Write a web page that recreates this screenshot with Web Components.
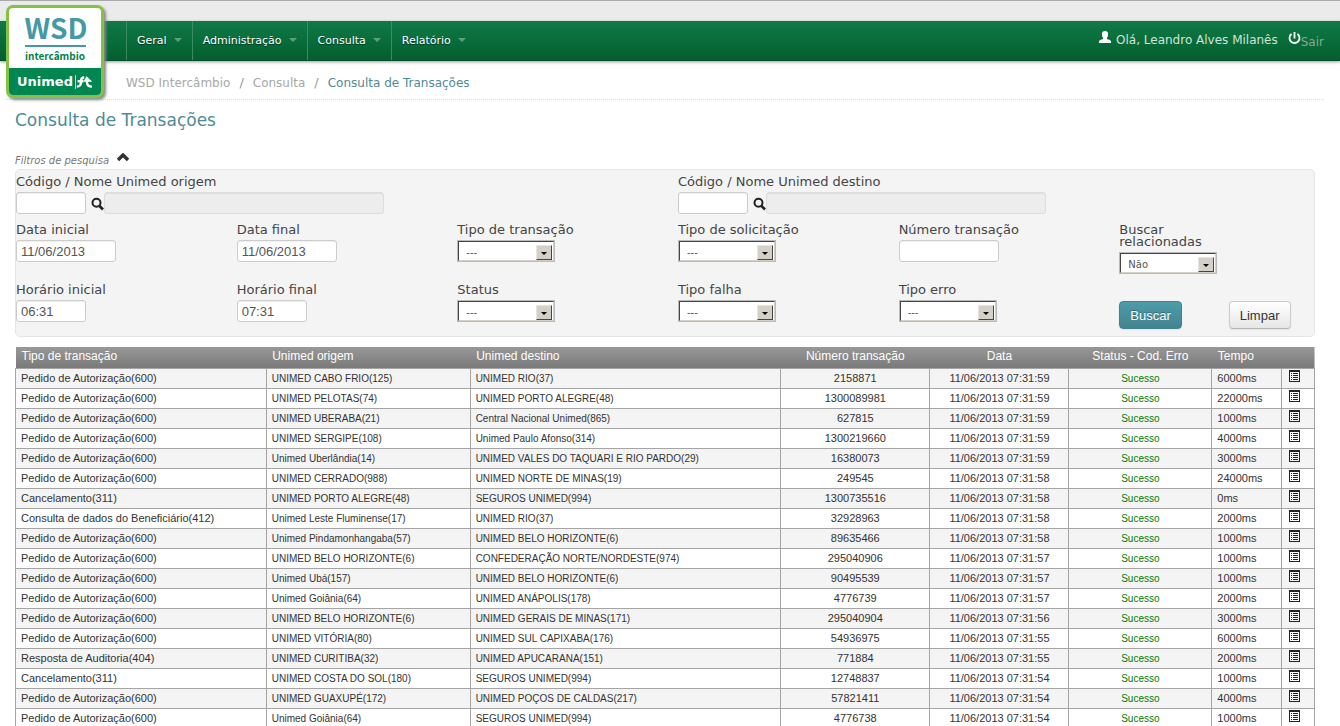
<!DOCTYPE html>
<html lang="pt-BR">
<head>
<meta charset="utf-8">
<title>WSD Intercâmbio - Consulta de Transações</title>
<style>
html { scrollbar-width: none; }
body { margin: 0; background: #fff; color: #444; font-family: "DejaVu Sans", sans-serif; font-size: 12px; }
</style>
</head>
<body>
<wsd-app>
  <wsd-header slot="header" user="Leandro Alves Milanês">
    <wsd-menu-item>Geral</wsd-menu-item>
    <wsd-menu-item>Administração</wsd-menu-item>
    <wsd-menu-item>Consulta</wsd-menu-item>
    <wsd-menu-item>Relatório</wsd-menu-item>
  </wsd-header>
  <wsd-breadcrumb slot="header">
    <a href="#">WSD Intercâmbio</a>
    <a href="#">Consulta</a>
    <a href="#" aria-current="page">Consulta de Transações</a>
  </wsd-breadcrumb>
  <h1>Consulta de Transações</h1>
  <wsd-filters>
    <wsd-field class="wide" kind="lookup" label="Código / Nome Unimed origem"></wsd-field>
    <wsd-field class="wide" kind="lookup" label="Código / Nome Unimed destino"></wsd-field>
    <wsd-field label="Data inicial" value="11/06/2013"></wsd-field>
    <wsd-field label="Data final" value="11/06/2013"></wsd-field>
    <wsd-field kind="select" label="Tipo de transação" value="---"></wsd-field>
    <wsd-field kind="select" label="Tipo de solicitação" value="---"></wsd-field>
    <wsd-field label="Número transação"></wsd-field>
    <wsd-field class="narrow" kind="select" label="Buscar relacionadas" value="Não"></wsd-field>
    <wsd-field kind="short" label="Horário inicial" value="06:31"></wsd-field>
    <wsd-field kind="short" label="Horário final" value="07:31"></wsd-field>
    <wsd-field kind="select" label="Status" value="---"></wsd-field>
    <wsd-field kind="select" label="Tipo falha" value="---"></wsd-field>
    <wsd-field kind="select" label="Tipo erro" value="---"></wsd-field>
    <div class="actions">
      <wsd-button variant="primary">Buscar</wsd-button>
      <wsd-button>Limpar</wsd-button>
    </div>
  </wsd-filters>
  <wsd-transactions></wsd-transactions>
</wsd-app>

<script>
const define = (name, html) => customElements.define(name, class extends HTMLElement {
  constructor() {
    super();
    this.attachShadow({ mode: "open" });
  }
  connectedCallback() {
    if (this.shadowRoot.firstChild) return;
    const t = document.createElement("template");
    t.innerHTML = typeof html === "function" ? html(this) : html;
    this.shadowRoot.append(t.content.cloneNode(true));
  }
});

define("wsd-app", `
<style>
:host { display: block; }
main { padding: 0 25px 0 15px; }
::slotted(h1) { margin: 10px 0 24px; font-size: 17px; font-weight: normal; line-height: 20px; color: #4e8b97; }
</style>
<slot name="header"></slot>
<main><slot></slot></main>`);

define("wsd-logo", `
<style>
:host { display: block; }
a { display: block; width: 92px; border: 3px solid #83c341; border-radius: 7px; overflow: hidden; background: #fff; box-shadow: 2px 2px 3px #888; text-decoration: none; text-align: center; font-family: "Noto Sans CJK JP", sans-serif; font-weight: bold; }
.name { display: block; width: 61px; margin: 0 auto; padding: 5px 0 4px; border-bottom: 2px solid #4499a5; color: #4499a5; font-size: 28px; line-height: 28px; }
.sub { display: block; height: 21px; color: #00834c; font-size: 10px; line-height: 17px; }
.brand { display: flex; align-items: center; justify-content: center; gap: 1px; height: 27px; background: #008751; color: #fff; font: bold 13px/27px "DejaVu Sans", sans-serif; }
</style>
<a href="#"><span class="name">WSD</span><span class="sub">intercâmbio</span>
<span class="brand">Unimed<svg width="19" height="14" viewBox="0 0 19 14" fill="none" stroke="#fff" aria-hidden="true"><path d="M1.500 0v14" stroke-width="1" opacity=".7"/><path d="M2.800 11.600Q6.800 11.400 7 7.500V5.500Q7.300 2.500 10.200 2.500M3.500 6.200H9.500M13 4V7.500Q13.200 11.600 18 11.600" stroke-width="2.400"/><path d="M9.500 6.800L12.500 1.200L18.300 6.800Z" fill="#fff" stroke="none"/></svg></span></a>`);

define("wsd-menu-item", `
<style>
:host { display: block; border-left: 1px solid #3d8a63; }
a { display: flex; align-items: center; gap: 7px; height: 38px; padding: 0 10px; color: #fff; font-size: 11px; text-decoration: none; text-shadow: 0 1px 1px #033; }
i { border: 4px solid transparent; border-top-color: #5f9f80; border-bottom: 0; }
</style>
<a href="#"><slot></slot><i></i></a>`);

define("wsd-header", el => `
<style>
:host { display: block; border-top: 1px solid #a9a9a9; background: #ebebeb; padding-top: 20px; }
.bar { display: flex; justify-content: space-between; height: 40px; box-sizing: border-box; padding: 0 16px 0 126px; background: linear-gradient(#107a46, #025f30); border-bottom: 1px solid #035028; box-shadow: 0 1px 3px #999; }
wsd-logo { position: absolute; top: 5px; left: 6px; z-index: 2; }
nav, .user { display: flex; }
.user { align-items: center; height: 38px; color: #d0e4d8; font-size: 12px; }
.user > svg { margin: -6px 5px 0 0; }
a { display: flex; color: #85a893; margin-left: 10px; text-decoration: none; align-items: flex-end; }
a svg { margin-bottom: 4px; }
</style>
<wsd-logo></wsd-logo>
<div class="bar">
  <nav><slot></slot></nav>
  <div class="user">
    <svg width="12" height="12" viewBox="0 0 12 12" fill="#fff" aria-hidden="true"><path d="M3 2.500Q3 0 6 0T9 2.500V4.500Q8.800 6 8 6.800V8Q11.500 9 12 10V12H0V10Q.5 9 4 8V6.800Q3.200 6 3 4.500Z"/></svg>
    <span>Olá, ${el.getAttribute("user")}</span>
    <a href="#"><svg width="13" height="13" viewBox="0 0 13 13" fill="none" stroke="#fff" stroke-width="1.800" aria-hidden="true"><path d="M6.500 0V6.500M3.500 2A5 5 0 1 0 9.500 2"/></svg><span>Sair</span></a>
  </div>
</div>`);

define("wsd-breadcrumb", `
<style>
:host { display: block; margin: 0 16px 0 5px; border-bottom: 1px dotted #ddd; }
nav { display: flex; height: 38px; padding: 5px 0 0 121px; box-sizing: border-box; align-items: center; font-size: 12px; }
::slotted(a) { color: #a8a8a8; text-decoration: none; }
::slotted(a[aria-current]) { color: #4e8b97; }
::slotted(a:not(:first-child))::before { content: "/"; color: #999; margin: 0 9px; font-size: 13px; }
</style>
<nav aria-label="Navegação"><slot></slot></nav>`);

define("wsd-filters", `
<style>
:host { display: block; margin-bottom: 10px; }
.toggle { display: flex; align-items: flex-start; gap: 8px; border: 0; padding: 0; background: none; color: #777; font: italic 10px/14px "DejaVu Sans", sans-serif; height: 15px; }
.toggle svg { margin-top: -1px; }
form { display: grid; grid-template-columns: repeat(5, 17%) 1fr; row-gap: 9px; padding: 5px 0 7px; border: 1px solid #e5e5e5; border-radius: 5px; background: #f4f4f4; }
::slotted(.wide) { grid-column: span 3; }
::slotted(.narrow) { width: 98px; }
::slotted(.actions) { display: flex; align-items: flex-end; gap: 47px; height: 46px; }
</style>
<button class="toggle" type="button"><span>Filtros de pesquisa</span><svg width="12" height="9" viewBox="0 0 12 9" aria-hidden="true"><path d="M1 7L6 2L11 7" fill="none" stroke="#333" stroke-width="3.400"/></svg></button>
<form><slot></slot></form>`);

define("wsd-field", el => {
  const kind = el.getAttribute("kind") || "text";
  const value = el.getAttribute("value") || "";
  const controls = {
    text: `<input id="c" type="text" value="${value}">`,
    short: `<input id="c" class="short" type="text" value="${value}">`,
    select: `<span class="select"><select id="c"><option>${value}</option></select></span>`,
    lookup: `<span class="lookup"><input id="c" class="short" type="text"><button type="button" aria-label="Pesquisar"><svg width="13" height="14" viewBox="0 0 13 14" fill="none" stroke="#222" aria-hidden="true"><circle cx="5.500" cy="5.800" r="4" stroke-width="2"/><path d="M8.500 9L12 12.500" stroke-width="2.600"/></svg></button><input class="long" type="text" aria-label="Nome" disabled></span>`
  };
  return `
<style>
:host { display: block; }
label { display: block; padding-top: 1px; margin-bottom: 4px; color: #444; font-size: 13px; line-height: 12px; }
input { display: block; box-sizing: border-box; width: 100px; height: 22px; margin: 0; padding: 0 4px; border: 1px solid #ccc; border-radius: 3px; background: #fff; box-shadow: inset 0 1px 1px #0001; color: #555; font: 13px "Liberation Sans", sans-serif; }
.short { width: 70px; }
.long { width: 280px; background: #ededed; border-color: #ddd; }
.lookup { display: flex; }
.lookup button { display: flex; width: 18px; padding: 5px 0 0 5px; border: 0; background: none; }
.select { display: block; position: relative; width: 98px; height: 22px; box-sizing: border-box; border: 1px solid #bbb; }
select { appearance: none; display: block; box-sizing: border-box; width: 100%; height: 20px; margin: 0; padding: 3px 18px 0 7px; border: 1px solid; border-color: #444 #d4d0c8 #d4d0c8 #444; border-radius: 0; background: #fff; color: #555; font: 10px "DejaVu Sans", sans-serif; }
.select::before { content: ""; position: absolute; right: 2px; bottom: 1px; width: 16px; height: 15px; box-sizing: border-box; border: 1px solid; border-color: #e8e5e0 #444 #444 #e8e5e0; background: #d4d0c8; pointer-events: none; }
.select::after { content: ""; position: absolute; right: 7px; bottom: 6px; border: 3px solid transparent; border-top-color: #000; border-bottom: 0; pointer-events: none; }
</style>
<label for="c">${el.getAttribute("label")}</label>${controls[kind]}`;
});

define("wsd-button", `
<style>
:host { display: block; }
button { display: block; height: 28px; padding: 0 10px; border: 1px solid #ccc; border-bottom-color: #b3b3b3; border-radius: 4px; background: linear-gradient(#fff, #e6e6e6); color: #333; font: 13px "Liberation Sans", sans-serif; box-shadow: 0 1px 2px #0001; }
:host([variant=primary]) button { border-color: #3d8390; background: linear-gradient(#4d9caa, #428490); color: #fff; text-shadow: 0 -1px 0 #0004; }
</style>
<button type="button"><slot></slot></button>`);

const A = "Pedido de Autorização(600)";
const C = "Cancelamento(311)";
const rows = [
  [A, "UNIMED CABO FRIO(125)", "UNIMED RIO(37)", "2158871", "59", "6000"],
  [A, "UNIMED PELOTAS(74)", "UNIMED PORTO ALEGRE(48)", "1300089981", "59", "22000"],
  [A, "UNIMED UBERABA(21)", "Central Nacional Unimed(865)", "627815", "59", "1000"],
  [A, "UNIMED SERGIPE(108)", "Unimed Paulo Afonso(314)", "1300219660", "59", "4000"],
  [A, "Unimed Uberlândia(14)", "UNIMED VALES DO TAQUARI E RIO PARDO(29)", "16380073", "59", "3000"],
  [A, "UNIMED CERRADO(988)", "UNIMED NORTE DE MINAS(19)", "249545", "58", "24000"],
  [C, "UNIMED PORTO ALEGRE(48)", "SEGUROS UNIMED(994)", "1300735516", "58", "0"],
  ["Consulta de dados do Beneficiário(412)", "Unimed Leste Fluminense(17)", "UNIMED RIO(37)", "32928963", "58", "2000"],
  [A, "Unimed Pindamonhangaba(57)", "UNIMED BELO HORIZONTE(6)", "89635466", "58", "1000"],
  [A, "UNIMED BELO HORIZONTE(6)", "CONFEDERAÇÃO NORTE/NORDESTE(974)", "295040906", "57", "1000"],
  [A, "Unimed Ubá(157)", "UNIMED BELO HORIZONTE(6)", "90495539", "57", "1000"],
  [A, "Unimed Goiânia(64)", "UNIMED ANÁPOLIS(178)", "4776739", "57", "2000"],
  [A, "UNIMED BELO HORIZONTE(6)", "UNIMED GERAIS DE MINAS(171)", "295040904", "56", "3000"],
  [A, "UNIMED VITÓRIA(80)", "UNIMED SUL CAPIXABA(176)", "54936975", "55", "6000"],
  ["Resposta de Auditoria(404)", "UNIMED CURITIBA(32)", "UNIMED APUCARANA(151)", "771884", "55", "2000"],
  [C, "UNIMED COSTA DO SOL(180)", "SEGUROS UNIMED(994)", "12748837", "54", "1000"],
  [A, "UNIMED GUAXUPÉ(172)", "UNIMED POÇOS DE CALDAS(217)", "57821411", "54", "4000"],
  [A, "Unimed Goiânia(64)", "SEGUROS UNIMED(994)", "4776738", "54", "1000"]
];
const listIcon = `<a href="#" aria-label="Detalhes"><svg width="11" height="12" viewBox="0 0 11 12" aria-hidden="true"><path d="M0 0H11V12H0ZM1 2V11H10V2Z" fill="#222" fill-rule="evenodd"/><path d="M2 3h1v1H2zM4 3h5v1H4zM2 5h1v1H2zM4 5h5v1H4zM2 7h1v1H2zM4 7h5v1H4zM2 9h1v1H2zM4 9h5v1H4z" fill="#222"/></svg></a>`;

define("wsd-transactions", `
<style>
:host { display: block; }
table { width: 100%; table-layout: fixed; border-collapse: collapse; font-family: "Liberation Sans", sans-serif; color: #333; }
thead { background: linear-gradient(#989898, #787878); }
th { height: 19px; padding: 0 6px 2px; color: #fff; font-size: 12px; font-weight: normal; text-align: left; line-height: 19px; }
td { height: 19px; padding: 0 5px; border: 1px solid #a5a5a5; font-size: 11px; line-height: 19px; white-space: nowrap; }
tbody tr:nth-child(odd) { background: #f4f4f4; }
.mid { text-align: center; }
.small { font-size: 10px; }
.ok { color: #008000; }
.icon { padding: 1px 0 0 7px; line-height: 0; vertical-align: top; box-sizing: border-box; }
</style>
<table>
<colgroup><col style="width:19.3%"><col style="width:15.7%"><col style="width:23.9%"><col style="width:11.5%"><col style="width:10.7%"><col style="width:11%"><col style="width:5.4%"><col></colgroup>
<thead><tr><th>Tipo de transação</th><th>Unimed origem</th><th>Unimed destino</th><th class="mid">Número transação</th><th class="mid">Data</th><th class="mid">Status - Cod. Erro</th><th>Tempo</th><th></th></tr></thead>
<tbody>${rows.map(r => `<tr><td>${r[0]}</td><td class="small">${r[1]}</td><td class="small">${r[2]}</td><td class="mid">${r[3]}</td><td class="mid">11/06/2013 07:31:${r[4]}</td><td class="mid small ok">Sucesso</td><td>${r[5]}ms</td><td class="icon">${listIcon}</td></tr>`).join("")}</tbody>
</table>`);
</script>
</body>
</html>
